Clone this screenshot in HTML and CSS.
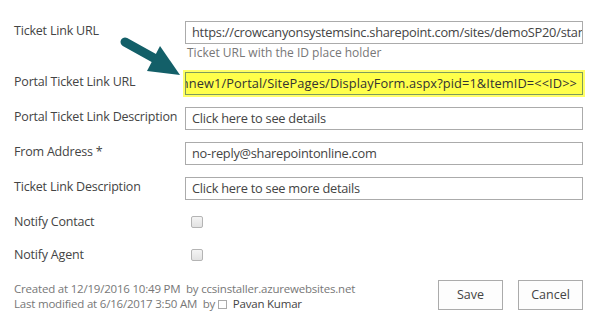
FILE: index.html
```html
<!DOCTYPE html>
<html lang="en">
<head>
    <meta charset="UTF-8">
    <meta name="viewport" content="width=device-width, initial-scale=1.0">
    <title>Email Settings</title>
    <link rel="stylesheet" href="styles.css">
</head>
<body>
    <div class="form">
        <div class="row">
            <div class="label">Ticket Link URL</div>
            <div class="field">
                <div class="textbox"><span class="value">https://crowcanyonsystemsinc.sharepoint.com/sites/demoSP20/standard/crowcanyonnew1/Portal/SitePages/DisplayForm.aspx?pid=1&amp;ItemID=&lt;&lt;ID&gt;&gt;</span></div>
                <div class="hint">Ticket URL with the ID place holder</div>
            </div>
        </div>

        <div class="row">
            <div class="label">Portal Ticket Link URL</div>
            <div class="field">
                <div class="textbox highlight"><span class="value">https://crowcanyonsystemsinc.sharepoint.com/sites/demoSP20/standard/crowcanyonnew1/Portal/SitePages/DisplayForm.aspx?pid=1&amp;ItemID=&lt;&lt;ID&gt;&gt;</span></div>
            </div>
        </div>

        <div class="row">
            <div class="label">Portal Ticket Link Description</div>
            <div class="field">
                <div class="textbox"><span class="value">Click here to see details</span></div>
            </div>
        </div>

        <div class="row">
            <div class="label">From Address <span class="req">*</span></div>
            <div class="field">
                <div class="textbox"><span class="value">no-reply@sharepointonline.com</span></div>
            </div>
        </div>

        <div class="row">
            <div class="label">Ticket Link Description</div>
            <div class="field">
                <div class="textbox"><span class="value">Click here to see more details</span></div>
            </div>
        </div>

        <div class="row check-row">
            <div class="label">Notify Contact</div>
            <div class="field"><span class="checkbox"></span></div>
        </div>

        <div class="row check-row">
            <div class="label">Notify Agent</div>
            <div class="field"><span class="checkbox"></span></div>
        </div>

        <div class="footer">
            <div class="meta">
                <div>Created at 12/19/2016 10:49 PM&nbsp; by ccsinstaller.azurewebsites.net</div>
                <div>Last modified at 6/16/2017 3:50 AM&nbsp; by <span class="presence"></span> <span class="user">Pavan Kumar</span></div>
            </div>
            <div class="buttons">
                <button class="btn">Save</button>
                <button class="btn">Cancel</button>
            </div>
        </div>
    </div>

    <!-- callout arrow pointing at the highlighted field -->
    <svg class="arrow" width="70" height="50" viewBox="115 35 70 50">
        <line x1="125" y1="42" x2="161" y2="62" stroke="#135f68" stroke-width="9" stroke-linecap="round"/>
        <polygon points="160,46 180,75 147,71" fill="#135f68"/>
    </svg>
</body>
</html>
```

FILE: styles.css
```css
* {
    box-sizing: border-box;
}

body {
    margin: 0;
    background: #fff;
    font-family: 'Open Sans', sans-serif;
    color: #444;
    position: relative;
    overflow: hidden;
}

.form {
    padding: 21px 24px 0 14px;
    width: 607px;
}

.row {
    display: grid;
    grid-template-columns: 171px 398px;
    margin-bottom: 12px;
}

.label {
    font-size: 12.5px;
    letter-spacing: -0.2px;
    line-height: 18px;
    padding-top: 1px;
    white-space: nowrap;
}

.req {
    color: #444;
}

.field {
    min-width: 0;
}

.textbox {
    position: relative;
    width: 398px;
    height: 23px;
    border: 1px solid #ababab;
    overflow: hidden;
    contain: paint;
    font-size: 12.8px;
    letter-spacing: -0.25px;
    line-height: 21px;
    color: #444;
}

.textbox .value {
    display: block;
    padding: 0 6px;
    width: 10000px;
    white-space: nowrap;
}

.textbox.highlight {
    background: #ffff4a;
    border-color: #7d9b5c;
    box-shadow: 0 0 0 2px #ffff66;
    color: #333;
    letter-spacing: 0.1px;
}

/* scrolled to the end of the value, like a focused input */
.textbox.highlight .value {
    position: absolute;
    right: 5px;
    top: 0;
    width: auto;
    padding: 0;
}

.hint {
    font-size: 12px;
    color: #777;
    line-height: 18px;
    padding-left: 2px;
    margin-bottom: -2px;
}

.check-row {
    margin-bottom: 14px;
    height: 19px;
    align-items: center;
}

.checkbox {
    display: block;
    width: 12px;
    height: 12px;
    margin-left: 6px;
    border: 1px solid #b4b4b4;
    border-radius: 2px;
    background: linear-gradient(#f4f4f4, #e2e2e2);
}

.footer {
    display: flex;
    justify-content: space-between;
    align-items: center;
    margin-top: 12px;
}

.meta {
    font-size: 11.5px;
    letter-spacing: -0.2px;
    line-height: 15px;
    color: #777;
    padding-top: 3px;
}

.presence {
    display: inline-block;
    width: 9px;
    height: 9px;
    border: 1px solid #aaa;
    vertical-align: -1px;
}

.user {
    color: #444;
    margin-left: 3px;
}

.buttons {
    display: flex;
    gap: 15px;
}

.btn {
    width: 65px;
    height: 30px;
    border: 1px solid #ababab;
    background: #fdfdfd;
    font-family: 'Open Sans', sans-serif;
    font-size: 12.5px;
    color: #444;
    padding: 0;
}

.arrow {
    position: absolute;
    left: 115px;
    top: 35px;
}
```
